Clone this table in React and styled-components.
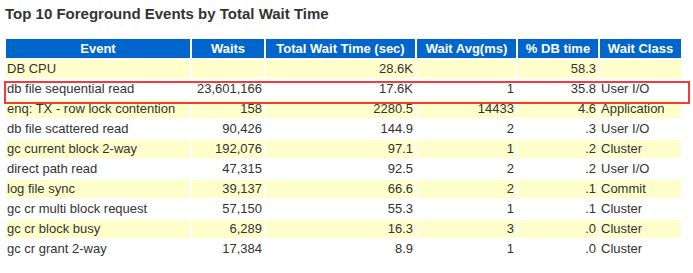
import React from 'react'
import styled, { createGlobalStyle } from 'styled-components'

const GlobalStyle = createGlobalStyle`
  body {
    margin: 0;
    background: #ffffff;
    font-family: "Liberation Sans", Arial, sans-serif;
  }
`

const rows = [
  ['DB CPU', '', '28.6K', '', '58.3', ''],
  ['db file sequential read', '23,601,166', '17.6K', '1', '35.8', 'User I/O'],
  ['enq: TX - row lock contention', '158', '2280.5', '14433', '4.6', 'Application'],
  ['db file scattered read', '90,426', '144.9', '2', '.3', 'User I/O'],
  ['gc current block 2-way', '192,076', '97.1', '1', '.2', 'Cluster'],
  ['direct path read', '47,315', '92.5', '2', '.2', 'User I/O'],
  ['log file sync', '39,137', '66.6', '2', '.1', 'Commit'],
  ['gc cr multi block request', '57,150', '55.3', '1', '.1', 'Cluster'],
  ['gc cr block busy', '6,289', '16.3', '3', '.0', 'Cluster'],
  ['gc cr grant 2-way', '17,384', '8.9', '1', '.0', 'Cluster'],
]

const columns = [
  { label: 'Event', width: 184 },
  { label: 'Waits', width: 72 },
  { label: 'Total Wait Time (sec)', width: 149 },
  { label: 'Wait Avg(ms)', width: 99 },
  { label: '% DB time', width: 80 },
  { label: 'Wait Class', width: 81 },
]

const Page = styled.div`
  position: relative;
  padding: 4px 0 0 4px;
  width: 689px;
`

const Title = styled.h3`
  margin: 0 0 13px 1px;
  font-size: 15px;
  font-weight: bold;
  color: #333333;
  line-height: 20px;
`

const Table = styled.table`
  border-collapse: separate;
  border-spacing: 2px;
  table-layout: fixed;
  font-size: 13px;
`

const Th = styled.th`
  box-sizing: border-box;
  background: #0066cc;
  color: #ffffff;
  font-weight: bold;
  font-size: 13px;
  height: 19px;
  padding: 0 2px;
  text-align: center;
  white-space: nowrap;
`

const Td = styled.td`
  box-sizing: border-box;
  background: ${p => (p.$shade ? '#ffffcc' : '#ffffff')};
  color: #333333;
  height: 18px;
  padding: 0 2px 0 1px;
  text-align: ${p => (p.$num ? 'right' : 'left')};
  white-space: nowrap;
  line-height: 18px;
`

const Highlight = styled.div`
  position: absolute;
  left: 4px;
  top: 81px;
  width: 686px;
  height: 23px;
  box-sizing: border-box;
  border: 2px solid #f03c3c;
  pointer-events: none;
`

export default function App() {
  return (
    <Page>
      <GlobalStyle />
      <Title>Top 10 Foreground Events by Total Wait Time</Title>
      <Table>
        <thead>
          <tr>
            {columns.map(c => (
              <Th key={c.label} style={{ width: c.width }}>{c.label}</Th>
            ))}
          </tr>
        </thead>
        <tbody>
          {rows.map((r, i) => (
            <tr key={r[0]}>
              {r.map((v, j) => (
                <Td key={j} $shade={i % 2 === 0} $num={j > 0 && j < 5}>{v}</Td>
              ))}
            </tr>
          ))}
        </tbody>
      </Table>
      <Highlight />
    </Page>
  )
}
